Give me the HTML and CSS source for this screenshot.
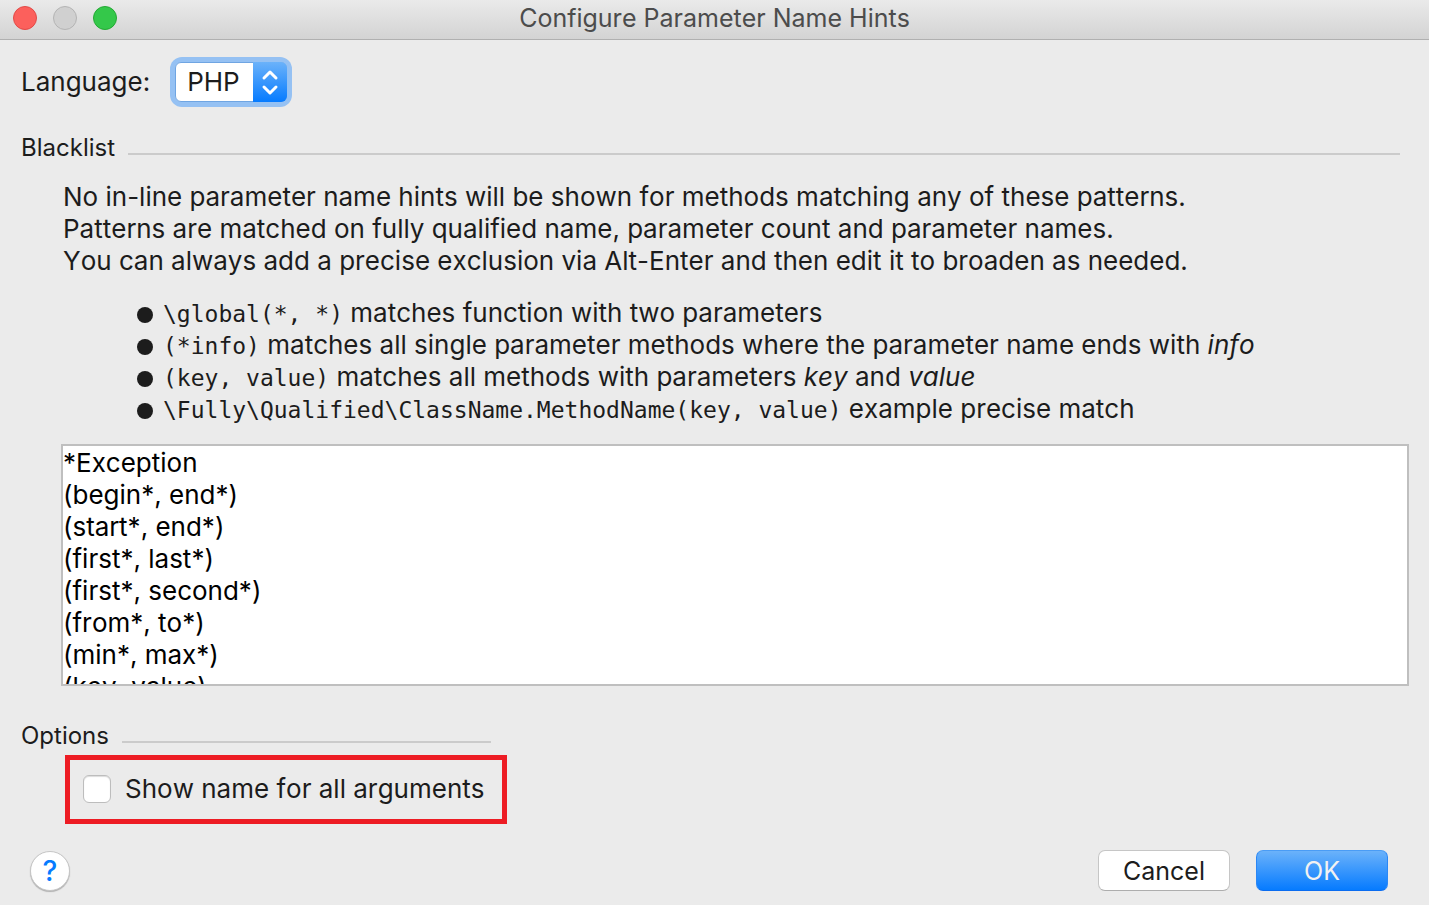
FILE: index.html
```html
<!DOCTYPE html>
<html lang="en">
    <head>
        <meta charset="UTF-8">
        <title>Configure Parameter Name Hints</title>
        <link rel="stylesheet" href="styles.css">
    </head>
    <body>
        <header class="titlebar">
            <div class="lights">
                <button class="light close" aria-label="Close"></button>
                <button class="light minimize" aria-label="Minimize" disabled></button>
                <button class="light zoom" aria-label="Zoom"></button>
            </div>
            <h1>Configure Parameter Name Hints</h1>
        </header>
        <main>
            <div class="language">
                <label for="language">Language:</label>
                <div class="select">
                    <select id="language">
                        <option>PHP</option>
                    </select>
                    <svg class="arrows" viewBox="0 0 34 40" aria-hidden="true">
                        <path d="M11 16 L17 10 L23 16 M11 25 L17 31 L23 25"/>
                    </svg>
                </div>
            </div>

            <section class="blacklist">
                <h2 id="blacklistTitle">Blacklist</h2>
                <div class="hint">
                    <p>
                        No in-line parameter name hints will be shown for methods matching any of these patterns.<br>
                        Patterns are matched on fully qualified name, parameter count and parameter names.<br>
                        You can always add a precise exclusion via Alt-Enter and then edit it to broaden as needed.
                    </p>
                    <ul>
                        <li><code>\global(*, *)</code> matches function with two parameters</li>
                        <li><code>(*info)</code> matches all single parameter methods where the parameter name ends with <i>info</i></li>
                        <li><code>(key, value)</code> matches all methods with parameters <i>key</i> and <i>value</i></li>
                        <li><code>\Fully\Qualified\ClassName.MethodName(key, value)</code> example precise match</li>
                    </ul>
                </div>
                <textarea id="patterns" aria-labelledby="blacklistTitle" spellcheck="false">*Exception
(begin*, end*)
(start*, end*)
(first*, last*)
(first*, second*)
(from*, to*)
(min*, max*)
(key, value)</textarea>
            </section>

            <section class="options">
                <h2>Options</h2>
                <div class="highlight">
                    <input type="checkbox" id="showAll">
                    <label for="showAll">Show name for all arguments</label>
                </div>
            </section>
        </main>
        <footer>
            <button class="help" aria-label="Help">?</button>
            <button class="btn">Cancel</button>
            <button class="btn primary">OK</button>
        </footer>
    </body>
</html>
```
FILE: styles.css
```css
* {
    box-sizing: border-box;
}
body {
    margin: 0;
    min-height: 100vh;
    display: flex;
    flex-direction: column;
    background-color: #ebebeb;
    color: #1c1c1c;
    font-family: Inter, "Liberation Sans", sans-serif;
    font-size: 26px;
    font-kerning: none;
    line-height: 32px;
}
button, select, textarea {
    font: inherit;
    font-kerning: inherit;
    color: inherit;
}
h1, h2, p, ul {
    margin: 0;
    font-weight: 400;
}
.titlebar {
    display: grid;
    grid-template-columns: 1fr auto 1fr;
    align-items: center;
    height: 40px;
    padding: 0 13px 3px;
    background: linear-gradient(#eaeaea, #d3d3d3);
    border-bottom: 1px solid #b0b0b0;
}
.titlebar h1 {
    font-size: 25px;
    color: #4c4c4c;
}
.lights {
    display: flex;
    gap: 16px;
}
.light {
    width: 24px;
    height: 24px;
    padding: 0;
    border: 1px solid;
    border-radius: 50%;
}
.close {
    background-color: #fc605c;
    border-color: #e24a47;
}
.minimize {
    background-color: #d0d0d0;
    border-color: #b4b4b4;
}
.zoom {
    background-color: #34c84a;
    border-color: #24a934;
}
main {
    padding: 22px 20px 0 21px;
}
.language {
    display: flex;
    align-items: center;
    gap: 25px;
}
.select {
    display: grid;
    grid-template-columns: 78px 34px;
    height: 40px;
    border-radius: 7px;
    box-shadow: 0 0 0 5px #95c1f3;
}
.select select {
    grid-area: 1 / 1 / 2 / 3;
    padding: 0 0 0 11px;
    appearance: none;
    background-color: #fff;
    border: 1px solid #6fa5e2;
    border-radius: 6px;
    outline: none;
}
.arrows {
    grid-area: 1 / 2 / 2 / 3;
    height: 40px;
    background: linear-gradient(#6bb2fa, #067bff);
    border-radius: 0 6px 6px 0;
    pointer-events: none;
}
.arrows path {
    fill: none;
    stroke: #fff;
    stroke-width: 3;
    stroke-linecap: round;
    stroke-linejoin: round;
}
h2 {
    display: flex;
    align-items: center;
    gap: 13px;
    font-size: 24px;
}
h2::after {
    content: "";
    flex: 1;
    height: 2px;
    margin-top: 12px;
    background-color: #cbcbcb;
}
.blacklist {
    margin-top: 30px;
}
.blacklist h2 {
    margin-right: 9px;
}
.hint {
    padding: 17px 0 0 42px;
}
ul {
    padding: 20px 0 0 74px;
    list-style: none;
}
li::before {
    content: "";
    display: inline-block;
    width: 16px;
    height: 16px;
    margin-right: 10px;
    vertical-align: -1px;
    border-radius: 50%;
    background-color: #1c1c1c;
}
code {
    font-family: "DejaVu Sans Mono", monospace;
    font-size: 23px;
    line-height: 1;
}
textarea {
    display: block;
    width: calc(100% - 40px);
    height: 242px;
    margin: 19px 0 0 40px;
    padding: 1px 0;
    color: #000;
    background-color: #fff;
    border: 2px solid #bfbfbf;
    outline: none;
    resize: none;
    overflow: hidden;
}
.options {
    width: fit-content;
    margin-top: 34px;
}
.options h2 {
    margin-right: 16px;
}
.highlight {
    display: flex;
    align-items: center;
    gap: 14px;
    margin: 3px 0 0 44px;
    padding: 13px 17px 14px 13px;
    border: 5px solid #ed1c24;
}
.highlight input {
    width: 28px;
    height: 28px;
    margin: 0;
    appearance: none;
    background-color: #fff;
    border: 1px solid #bdbdbd;
    border-radius: 6px;
    box-shadow: inset 0 1px 1px #dcdcdc;
}
footer {
    display: flex;
    align-items: center;
    gap: 26px;
    margin-top: auto;
    padding: 0 41px 14px 30px;
}
.help {
    width: 40px;
    height: 40px;
    margin-right: auto;
    padding: 0;
    background-color: #fff;
    border: 1px solid #c6c6c6;
    border-radius: 50%;
    box-shadow: 0 1px 1px #b0b0b0;
    color: #067bff;
    font-size: 28px;
    font-weight: 500;
}
.btn {
    width: 132px;
    height: 41px;
    padding: 0;
    background-color: #fff;
    border: 1px solid #c6c6c6;
    border-bottom-color: #adadad;
    border-radius: 7px;
    font-size: 25px;
}
.primary {
    background: linear-gradient(#6bb2fa, #067bff);
    border-color: #4a9cf5 #2b87f5 #0a6cf0;
    color: #f2f2f2;
}
```
